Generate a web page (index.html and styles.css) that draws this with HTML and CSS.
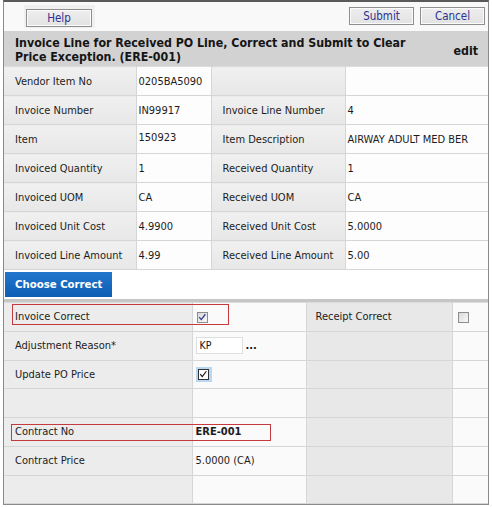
FILE: index.html
```html
<!DOCTYPE html>
<html>
<head>
<meta charset="utf-8">
<link rel="stylesheet" href="styles.css">
</head>
<body>
<div class="frame">
  <div class="toolbar">
    <div class="help-zone"><button class="btn btn-help">Help</button></div>
    <div class="actions">
      <button class="btn">Submit</button>
      <button class="btn">Cancel</button>
    </div>
  </div>
  <div class="titlebar">
    <div class="title">Invoice Line for Received PO Line, Correct and Submit to Clear Price Exception. (ERE-001)</div>
    <div class="edit">edit</div>
  </div>
  <table class="grid info">
    <colgroup><col class="c1"><col class="c2"><col class="c3"><col class="c4"></colgroup>
    <tr><td class="lbl">Vendor Item No</td><td class="val">0205BA5090</td><td class="lbl"></td><td class="val"></td></tr>
    <tr><td class="lbl">Invoice Number</td><td class="val">IN99917</td><td class="lbl">Invoice Line Number</td><td class="val">4</td></tr>
    <tr><td class="lbl">Item</td><td class="val"><span class="raised">150923</span></td><td class="lbl">Item Description</td><td class="val">AIRWAY ADULT MED BER</td></tr>
    <tr><td class="lbl">Invoiced Quantity</td><td class="val">1</td><td class="lbl">Received Quantity</td><td class="val">1</td></tr>
    <tr><td class="lbl">Invoiced UOM</td><td class="val">CA</td><td class="lbl">Received UOM</td><td class="val">CA</td></tr>
    <tr><td class="lbl">Invoiced Unit Cost</td><td class="val">4.9900</td><td class="lbl">Received Unit Cost</td><td class="val">5.0000</td></tr>
    <tr><td class="lbl">Invoiced Line Amount</td><td class="val">4.99</td><td class="lbl">Received Line Amount</td><td class="val">5.00</td></tr>
  </table>
  <div class="tabs"><div class="tab">Choose Correct</div></div>
  <div class="correct-wrap">
    <table class="grid correct">
      <colgroup><col class="d1"><col class="d2"><col class="d3"><col class="d4"></colgroup>
      <tr><td class="lbl">Invoice Correct</td>
          <td class="val"><span class="cb"><svg viewBox="0 0 11 11" width="9" height="9"><path d="M1.5 5 L4 8 L9 1.5" fill="none" stroke="#2a3f8a" stroke-width="1.6"/></svg></span></td>
          <td class="lbl2">Receipt Correct</td>
          <td class="val v4"><span class="cb"></span></td></tr>
      <tr><td class="lbl">Adjustment Reason*</td>
          <td class="val"><span class="inp">KP</span><span class="dots">...</span></td>
          <td class="lbl2"></td><td class="val"></td></tr>
      <tr><td class="lbl">Update PO Price</td>
          <td class="val"><span class="cb-focus"><span class="cb2"><svg viewBox="0 0 11 11" width="9" height="9"><path d="M1.5 5 L4 8 L9 1.5" fill="none" stroke="#111" stroke-width="1.4"/></svg></span></span></td>
          <td class="lbl2"></td><td class="val"></td></tr>
      <tr><td class="lbl"></td><td class="val"></td><td class="lbl2"></td><td class="val"></td></tr>
      <tr><td class="lbl">Contract No</td><td class="val strong">ERE-001</td><td class="lbl2"></td><td class="val"></td></tr>
      <tr><td class="lbl">Contract Price</td><td class="val">5.0000 (CA)</td><td class="lbl2"></td><td class="val"></td></tr>
      <tr><td class="lbl"></td><td class="val"></td><td class="lbl2"></td><td class="val"></td></tr>
    </table>
    <div class="mark mark-invoice"></div>
    <div class="mark mark-contract"></div>
  </div>
</div>
</body>
</html>
```

FILE: styles.css
```css
html, body {
  margin: 0;
  padding: 0;
  background: #ffffff;
}
body {
  font-family: "DejaVu Sans Condensed", "DejaVu Sans", sans-serif;
  font-stretch: condensed;
  font-size: 11px;
  color: #1c1c1c;
}
.frame {
  margin-left: 3px;
  width: 486px;
  box-sizing: border-box;
  border: 1px solid #8a8a8a;
  border-top: 2px solid #5a5a5a;
  background: #fff;
}
.toolbar {
  height: 29px;
  display: flex;
  justify-content: space-between;
  align-items: flex-start;
  background: #f9f9f9;
}
.help-zone {
  margin-left: 20px;
  margin-top: 3px;
  width: 71px;
  height: 23px;
  box-sizing: border-box;
  padding: 4px 0 0 2px;
  background: #f0f0f0;
}
.actions {
  display: flex;
  gap: 6px;
  margin-top: 5px;
  margin-right: 3px;
}
.btn {
  width: 65px;
  height: 18px;
  padding: 0;
  margin: 0;
  box-sizing: border-box;
  border: 1px solid #8e8e8e;
  box-shadow: inset 0 0 0 1px #fbfbfb;
  background: linear-gradient(#eeeeee, #e2e2e2);
  color: #2d3292;
  font-family: inherit;
  font-stretch: condensed;
  font-size: 11.5px;
  line-height: 16px;
}
.btn-help {
  width: 66px;
}
.titlebar {
  height: 35px;
  box-sizing: border-box;
  display: flex;
  justify-content: space-between;
  align-items: center;
  padding: 0 10px 0 11px;
  background: #d2d2d2;
}
.title {
  width: 404px;
  padding-top: 2px;
  font-weight: bold;
  font-size: 12.3px;
  line-height: 14px;
  color: #151515;
}
.edit {
  font-weight: bold;
  font-size: 12.3px;
  color: #151515;
  padding-top: 4px;
}
.grid {
  width: 484px;
  border-collapse: collapse;
  table-layout: fixed;
}
.grid td {
  height: 28px;
  padding: 0;
  border: 1px solid #d6d6d6;
  vertical-align: middle;
  white-space: nowrap;
  overflow: hidden;
}
.correct td {
  height: 27.75px;
}
.grid tr:first-child td { border-top-color: #dcdcdc; }
.grid td:first-child { border-left: none; }
.grid td:last-child { border-right: none; }
.info .c1 { width: 132px; }
.info .c2 { width: 75px; }
.info .c3 { width: 134px; }
.info .c4 { width: 143px; }
.lbl {
  padding-left: 11px !important;
  background: linear-gradient(#f0f0f0, #e7e7e7);
}
.val {
  padding-left: 2px !important;
  background: #fdfdfd;
}
.raised {
  display: inline-block;
  padding-bottom: 3px;
}
.tabs {
  height: 32px;
  box-sizing: border-box;
  padding-top: 2px;
  border-bottom: 3px solid #c6c6c6;
  background: #ffffff;
}
.tab {
  margin-left: 1px;
  width: 107px;
  height: 25px;
  box-sizing: border-box;
  padding-left: 10px;
  line-height: 25px;
  font-weight: bold;
  font-size: 11.3px;
  color: #ffffff;
  background: linear-gradient(#2277cc, #0c5db3);
}
.correct-wrap {
  position: relative;
}
.correct .d1 { width: 188px; }
.correct .d2 { width: 114px; }
.correct .d3 { width: 146px; }
.correct .d4 { width: 36px; }
.correct .lbl { background: #ececec; }
.correct .val { background: #fafafa; padding-left: 3px !important; }
.lbl2 {
  padding-left: 9px !important;
  background: #e8e8e8;
}
.correct .v4 { padding-left: 5px !important; }
.cb {
  display: inline-block;
  width: 11px;
  height: 11px;
  box-sizing: border-box;
  margin-left: 1px;
  border: 1px solid #8d8d8d;
  background: linear-gradient(135deg, #d9d9d9, #fafafa);
  vertical-align: middle;
}
.v4 .cb { margin-left: 0; }
.cb svg, .cb2 svg {
  display: block;
}
.cb-focus {
  display: inline-block;
  width: 16px;
  height: 15px;
  box-sizing: border-box;
  padding: 2px 0 0 2px;
  background: #b9d7f1;
  vertical-align: middle;
}
.cb2 {
  display: block;
  width: 11px;
  height: 11px;
  box-sizing: border-box;
  border: 1px solid #333;
  background: #fff;
}
.inp {
  display: inline-block;
  width: 47px;
  height: 17px;
  box-sizing: border-box;
  border: 1px solid #dedede;
  background: #fff;
  padding-left: 3px;
  line-height: 15px;
  font-size: 10.5px;
  color: #111;
  vertical-align: middle;
}
.dots {
  font-weight: bold;
  margin-left: 3px;
  color: #111;
  vertical-align: middle;
}
.strong {
  font-weight: bold;
}
.mark {
  position: absolute;
  box-sizing: border-box;
  border: 1px solid #c43a3e;
  pointer-events: none;
}
.mark-invoice {
  left: 8px;
  top: 2px;
  width: 217px;
  height: 21px;
}
.mark-contract {
  left: 7px;
  top: 122px;
  width: 260px;
  height: 17px;
}
```
